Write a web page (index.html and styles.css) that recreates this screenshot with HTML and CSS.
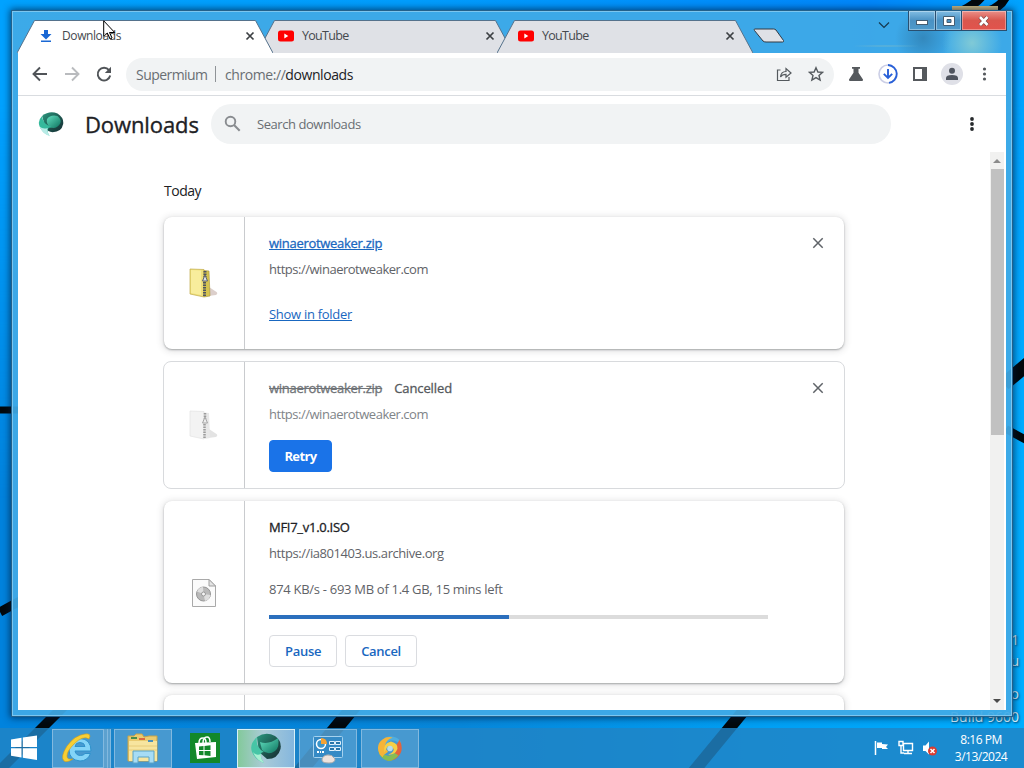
FILE: index.html
```html
<!DOCTYPE html>
<html lang="en">
<head>
  <meta charset="utf-8">
  <title>Downloads</title>
  <link rel="stylesheet" href="styles.css">
</head>
<body>
<div class="desktop">
  <svg class="wallpaper" width="1024" height="768" viewBox="0 0 1024 768">
    <g fill="none" stroke="#02080c">
      <path d="M0 410H18" stroke-width="7"/>
      <path d="M0 612L20 601" stroke-width="9"/>
      <path d="M-4 774L64 706" stroke-width="10"/>
      <path d="M690 776L746 708" stroke-width="12"/>
      <path d="M298 774L356 704" stroke-width="14"/>
      <path d="M1004 384L1030 362" stroke-width="14"/>
      <path d="M1006 429L1028 441" stroke-width="8"/>
      <path d="M960 12Q975 5 982-4M985 12Q1001 8 1006-4" stroke-width="9"/>
    </g>
    <path d="M952 6h46v5h-46z" fill="#d3bd83"/>
  </svg>
  <div class="watermark wm-a">1</div>
  <div class="watermark wm-b">u</div>
  <div class="watermark wm-c">o</div>
  <div class="watermark wm-d">Build 9600</div>

  <div class="window">
    <div class="titlebar">
      <div class="tabs">
        <div class="tab active">
          <svg class="tab-shape" width="256" height="33" viewBox="0 0 256 33"><path d="M0 33L17.500.5H238.500L256 33" fill="#fff" stroke="#55728c"/></svg>
          <svg class="favicon" width="16" height="16" viewBox="0 0 16 16"><path d="M6 2h4v4h3.500L8 11.500 2.500 6H6zM3 12.500h10V14H3z" fill="#1a68d4"/></svg>
          <span class="tab-title">Downloads</span>
          <svg class="tab-close" width="10" height="10" viewBox="0 0 10 10"><path d="M1.500 1.500l7 7M8.500 1.500l-7 7"/></svg>
        </div>
        <div class="tab">
          <svg class="tab-shape" width="256" height="33" viewBox="0 0 256 33"><path d="M0 33L17.500.5H238.500L256 33" fill="#dfe1e6" stroke="#55728c"/></svg>
          <svg class="favicon" width="16" height="16" viewBox="0 0 16 16"><rect y="2.500" width="16" height="11" rx="2.500" fill="#f00"/><path d="M6.300 5.500v5l4-2.500z" fill="#fff"/></svg>
          <span class="tab-title">YouTube</span>
          <svg class="tab-close" width="10" height="10" viewBox="0 0 10 10"><path d="M1.500 1.500l7 7M8.500 1.500l-7 7"/></svg>
        </div>
        <div class="tab">
          <svg class="tab-shape" width="256" height="33" viewBox="0 0 256 33"><path d="M0 33L17.500.5H238.500L256 33" fill="#dfe1e6" stroke="#55728c"/></svg>
          <svg class="favicon" width="16" height="16" viewBox="0 0 16 16"><rect y="2.500" width="16" height="11" rx="2.500" fill="#f00"/><path d="M6.300 5.500v5l4-2.500z" fill="#fff"/></svg>
          <span class="tab-title">YouTube</span>
          <svg class="tab-close" width="10" height="10" viewBox="0 0 10 10"><path d="M1.500 1.500l7 7M8.500 1.500l-7 7"/></svg>
        </div>
        <svg class="new-tab" width="32" height="15" viewBox="0 0 32 15"><path d="M1.500 1H20.500Q22 1 23 2L30.500 12.500Q31 14 29.500 14H13Q11 14 10 13L1.500 2.500Q1 1 1.500 1z" fill="#dfe1e6" stroke="#333b45"/></svg>
      </div>
      <svg class="tab-search" width="12" height="8" viewBox="0 0 12 8"><path d="M1 1.500l5 5 5-5" fill="none" stroke="#16384e" stroke-width="1.200"/></svg>
      <div class="caption-buttons">
        <div class="caption-button minimize"><svg width="13" height="6"><rect x=".5" y=".5" width="11" height="4" fill="#fff" stroke="#435d72"/></svg></div>
        <div class="caption-button maximize"><svg width="13" height="11"><path d="M.5.5h11v9H.5zM4 3.500v3h4v-3z" fill="#fff" fill-rule="evenodd" stroke="#435d72"/></svg></div>
        <div class="caption-button close"><svg width="14" height="12" viewBox="0 0 14 12"><path d="M3 2l7.500 8M10.500 2L3 10" stroke="#643939" stroke-width="4"/><path d="M3 2l7.500 8M10.500 2L3 10" stroke="#fff" stroke-width="2.700"/></svg></div>
      </div>
    </div>

    <div class="client">
      <div class="toolbar">
        <svg class="nav" width="20" height="20" viewBox="0 0 20 20"><path d="M17 10H4M10 3.500L3.500 10l6.500 6.500" fill="none" stroke="#505458" stroke-width="1.900"/></svg>
        <svg class="nav" width="20" height="20" viewBox="0 0 20 20"><path d="M3 10h13M10 3.500l6.500 6.500-6.500 6.500" fill="none" stroke="#b9bbbe" stroke-width="1.900"/></svg>
        <svg class="nav" width="20" height="20" viewBox="0 0 20 20"><path d="M15 6.200A6.300 6.300 0 1 0 16.200 11.500" fill="none" stroke="#505458" stroke-width="1.900"/><path d="M17 2.800V9h-6.200z" fill="#505458"/></svg>
        <div class="omnibox">
          <span class="origin">Supermium</span>
          <span class="origin-separator"></span>
          <span class="url">chrome://<b>downloads</b></span>
          <svg class="share" width="16" height="16" viewBox="0 0 16 16"><path d="M4.500 4H1.500V14.500H13V11M4.500 11Q5 5.500 10 5.500V2.500L15 7l-5 4.200V8.300Q6 8.300 4.500 11z" fill="none" stroke="#555a5e" stroke-width="1.200"/></svg>
          <svg class="star" width="16" height="16" viewBox="0 0 16 16"><path d="M8 1.700l1.900 4.300 4.700.4-3.600 3.100 1.100 4.600L8 11.600l-4.100 2.500L5 9.500 1.400 6.400l4.700-.4z" fill="none" stroke="#555a5e" stroke-width="1.400"/></svg>
        </div>
        <svg class="action" width="20" height="20" viewBox="0 0 20 20"><path d="M6 3h8v1.800h-1.500v4L17 15.500Q17.300 17 15.800 17H4.200Q2.700 17 3 15.500l4.500-6.700v-4H6z" fill="#55595d"/></svg>
        <svg class="action" width="20" height="20" viewBox="0 0 20 20"><circle cx="10" cy="10" r="9" fill="none" stroke="#cccfe6" stroke-width="1.600"/><path d="M10 1a9 9 0 0 1 1 17.900" fill="none" stroke="#2860d8" stroke-width="1.800"/><path d="M10 5v9M5.800 9.800L10 14l4.200-4.200" fill="none" stroke="#2860d8" stroke-width="1.900"/></svg>
        <svg class="action" width="20" height="20" viewBox="0 0 20 20"><path d="M3 3h14v14H3zM5 5v10h7V5z" fill="#55595d" fill-rule="evenodd"/></svg>
        <svg class="action profile" width="22" height="22" viewBox="0 0 22 22"><circle cx="11" cy="11" r="11" fill="#dfe0e7"/><circle cx="11" cy="7.800" r="3" fill="#50555f"/><path d="M5 17v-2Q5 12 11 12t6 3v2z" fill="#50555f"/></svg>
        <svg class="action" width="20" height="20" viewBox="0 0 20 20" fill="#55595d"><circle cx="10.500" cy="5" r="1.600"/><circle cx="10.500" cy="10" r="1.600"/><circle cx="10.500" cy="15" r="1.600"/></svg>
      </div>

      <div class="page-header">
        <svg class="logo" width="26" height="26" viewBox="0 0 32 32">
          <defs>
            <linearGradient id="teal" x1="0" y1="0" x2="1" y2="1"><stop offset="0" stop-color="#63e0c0"/><stop offset="1" stop-color="#0d735f"/></linearGradient>
            <linearGradient id="dark" x1="0" y1="0" x2="1" y2="1"><stop offset="0" stop-color="#2a9a80"/><stop offset=".6" stop-color="#1d4f4a"/><stop offset="1" stop-color="#142d33"/></linearGradient>
          </defs>
          <path d="M5 6Q14-1 24 3q8 5 7 13-2 10-13 10-6 0-9-6z" fill="url(#dark)"/>
          <path d="M11 10Q15 4 24 6q6 5 3 10-5 7-12 4-5-4-4-10z" fill="url(#teal)"/>
          <path d="M5 6Q-1 12 2 19q3 8 12 11-4-5-1-9 2-1 4-1Q5 15 5 6z" fill="#35b99c"/>
          <path d="M2 19q3 9 13 12-5-6-3-10-6 2-10-2z" fill="#b8ebe6"/>
        </svg>
        <h1>Downloads</h1>
        <div class="search">
          <svg width="20" height="20" viewBox="0 0 20 20"><circle cx="7.500" cy="7.500" r="4.800" fill="none" stroke="#898c90" stroke-width="1.900"/><path d="M11 11l5.700 5.700" stroke="#898c90" stroke-width="2.100"/></svg>
          <span>Search downloads</span>
        </div>
        <svg class="menu" width="20" height="20" viewBox="0 0 20 20" fill="#26292c"><circle cx="10" cy="5" r="1.900"/><circle cx="10" cy="10" r="1.900"/><circle cx="10" cy="15" r="1.900"/></svg>
      </div>

      <div class="page">
        <div class="list">
          <h2>Today</h2>

          <div class="card done">
            <div class="file-icon">
              <svg width="32" height="32" viewBox="0 0 32 32">
                <path d="M20 29l8-1q3-2-1-4l-6-4z" fill="#dccfcb"/>
                <path d="M2 2l14 .5V30L2 27z" fill="#efe07a" stroke="#c0aa4b" stroke-width=".7"/>
                <path d="M3 3l10 .5V28l-10-2z" fill="#f8ed9c"/>
                <path d="M16 3.500l5 .5L22 29l-6 1z" fill="#d5c34e" stroke="#a8933d" stroke-width=".6"/>
                <path d="M17 4v6M16.500 15v15" stroke="#4e5460" stroke-width="3" stroke-dasharray="1.500 1"/>
                <path d="M17 8l-2.500 6h5z" fill="#dfe3e9" stroke="#5b6070"/>
              </svg>
            </div>
            <div class="details">
              <a class="name">winaerotweaker.zip</a>
              <div class="source">https://winaerotweaker.com</div>
              <a class="show">Show in folder</a>
            </div>
            <svg class="remove" width="12" height="12" viewBox="0 0 12 12"><path d="M1.300 1.300l9.400 9.400M10.700 1.300l-9.400 9.400"/></svg>
          </div>

          <div class="card cancelled">
            <div class="file-icon">
              <svg width="32" height="32" viewBox="0 0 32 32">
                <path d="M20 29l8-1q3-2-1-4l-6-4z" fill="#e3e3e3"/>
                <path d="M2 2l14 .5V30L2 27z" fill="#f3f3f3" stroke="#e2e2e2" stroke-width=".7"/>
                <path d="M16 3.500l5 .5L22 29l-6 1z" fill="#e8e8e8"/>
                <path d="M17 4v6M16.500 15v15" stroke="#9c9c9c" stroke-width="2.500" stroke-dasharray="1.500 1"/>
                <path d="M17 8l-2.500 6h5z" fill="#eee" stroke="#a5a5a5"/>
              </svg>
            </div>
            <div class="details">
              <div class="title-row"><span class="name">winaerotweaker.zip</span><span class="tag">Cancelled</span></div>
              <div class="source">https://winaerotweaker.com</div>
              <div class="button primary">Retry</div>
            </div>
            <svg class="remove" width="12" height="12" viewBox="0 0 12 12"><path d="M1.300 1.300l9.400 9.400M10.700 1.300l-9.400 9.400"/></svg>
          </div>

          <div class="card progressing">
            <div class="file-icon">
              <svg width="32" height="32" viewBox="0 0 32 32">
                <path d="M4.500 3.500H21L27.500 10v20.500h-23z" fill="#fbfbfb" stroke="#a9a9a9"/>
                <path d="M21 3.500V10h6.500z" fill="#e4e4e4" stroke="#a0a0a0"/>
                <circle cx="15.500" cy="18" r="7" fill="#b9b9b9" stroke="#969696"/>
                <path d="M15.500 18L9 15.500q2-4.500 6-4.500zM15.500 18l7 1q-1 5-5.500 6z" fill="#dedede"/>
                <circle cx="15.500" cy="18" r="2" fill="#f4f4f4" stroke="#999"/>
              </svg>
            </div>
            <div class="details">
              <div class="name iso">MFI7_v1.0.ISO</div>
              <div class="source">https://ia801403.us.archive.org</div>
              <div class="status">874 KB/s - 693 MB of 1.4 GB, 15 mins left</div>
              <div class="progress"><div class="progress-bar" style="width: 48%"></div></div>
              <div class="buttons">
                <div class="button">Pause</div>
                <div class="button">Cancel</div>
              </div>
            </div>
          </div>

          <div class="card next"><div class="file-icon"></div></div>
        </div>
        <div class="scrollbar">
          <div class="arrow up"></div>
          <div class="thumb"></div>
          <div class="arrow down"></div>
        </div>
      </div>
    </div>
  </div>

  <div class="taskbar">
    <div class="start">
      <svg width="28" height="26" viewBox="0 0 28 26" fill="#fff"><path d="M1 4.500l10.500-1.700V12H1zM12.800 2.600L27 .5V12H12.800zM1 13.200h10.500v9.300L1 20.800zM12.800 13.200H27V25l-14.200-2.200z"/></svg>
    </div>
    <div class="task ie">
      <svg width="34" height="32" viewBox="0 0 34 32">
        <path d="M30 19H14q1 4.500 5.500 4.500 3 0 4.500-2h5.500q-3 7.500-10.500 7.500Q8 28 8 17.500 9 7 19 6.500q11 .5 11 12.500zM14 14.500h10q-.5-4-5-4t-5 4z" fill="#83d4f8" stroke="#2f92cc" fill-rule="evenodd"/>
        <path d="M28 7q3-6-4-5Q14 3 6 14-1 25 3 29q3 2 9-2-6 1-6-3 0-5 7-12Q22 3 28 7z" fill="#f7cf35" stroke="#d19b16" stroke-width=".6"/>
      </svg>
    </div>
    <div class="task explorer">
      <svg width="34" height="32" viewBox="0 0 34 32">
        <path d="M2 4h6l2-2h6l2 3 5-1h8v25H2z" fill="#eacb70" stroke="#c5a34b"/>
        <path d="M3 9h28v20H3z" fill="#f7e59f"/><path d="M5 5h6v2H5z" fill="#478c4c"/><path d="M13 6h6v2h-6z" fill="#db6841"/><path d="M22 8h5v2h-5z" fill="#4b90ba"/>
        <path d="M3 14h28M3 18h28" stroke="#e6cc7b"/>
        <path d="M7 31V19h21v12h-5v-6H12v6z" fill="#a6dcf5" stroke="#5ba4c6"/>
      </svg>
    </div>
    <div class="store">
      <svg width="30" height="30" viewBox="0 0 30 30"><path d="M0 0h30v30H0z" fill="#12882a"/><path d="M5 10l21-1v15L7 26z" fill="#fff"/><path d="M9 10q0-5 4-5 3 0 3 5M13 10q0-6 4-6 3 0 3 5" fill="none" stroke="#fff" stroke-width="1.500"/><path d="M9 13.500l4.500-.5v4H9zM14.500 12.900l6-.6V17h-6zM9 18h4.500v4.300L9 22zM14.500 18h6v5l-6-.7z" fill="#12882a"/></svg>
    </div>
    <div class="task active-task">
      <svg width="32" height="32" viewBox="0 0 32 32">
        <path d="M7 5Q16-1 25 4q7 5 5.500 13Q28 27 17 27L9 20z" fill="url(#dark)"/>
        <path d="M10 10Q19 13 28 6q2 9-3 13-7 5-13-1z" fill="url(#teal)"/>
        <path d="M7 5Q-1 12 2 20q3 8 12 11-4-5-3-9 0-2 3-2Q5 15 7 5z" fill="#47c5a6"/>
        <path d="M3 20q3 8 11 11-4-5-3-9-5 2-8-2z" fill="#a8f0d2"/>
      </svg>
    </div>
    <div class="task">
      <svg width="32" height="32" viewBox="0 0 32 32">
        <rect x="1.500" y="4.500" width="29" height="21" rx="1" fill="#358ac5" stroke="#a5d2ef"/>
        <circle cx="9" cy="12" r="4.500" fill="#3c95ca" stroke="#fff" stroke-width="1.500"/><path d="M9 12V6q6 0 6 6z" fill="#f5a335"/>
        <path d="M17.500 9.500h5v3h-5zM23.500 9.500h5v3h-5zM17.500 15.500h5v3h-5zM23.500 15.500h5v3h-5z" fill="#2876aa" stroke="#dff1fc"/>
        <path d="M5 20h4M10 20h3" stroke="#fff" stroke-width="2" stroke-dasharray="2 1"/>
        <path d="M10 28q0-4 5-5 5-1 8 4 0 4-6 4-7 0-7-3z" fill="#eee2dc" stroke="#aaa"/>
      </svg>
    </div>
    <div class="task">
      <svg width="28" height="28" viewBox="0 0 30 30">
        <path d="M5 9Q12-1 22 4q5 2 5 8-5-6-11-5-4 1-5 6-3-1-6-4z" fill="#4faee0"/>
        <path d="M25 6q6 11-2 19-5 5-12 3 7-1 9-6 1-4-2-7 5-3 7-9z" fill="#e3633c"/>
        <path d="M24 23Q15 33 7 26q-5-4-4-11 3 7 9 8 4 1 7-3 3 1 5 3z" fill="#86bd55"/>
        <path d="M4 22Q-1 12 7 6q5-4 11-2-7 2-8 7-1 4 3 8-5 3-6 6z" fill="#f5b438"/>
        <path d="M9 20q-2-10 7-12 8 2 7 8-3 7-10 6 6-2 6-6-4-5-7-2z" fill="#f6cf45"/>
        <circle cx="15" cy="15.500" r="3" fill="#b9dce9"/>
      </svg>
    </div>
    <div class="tray">
      <svg width="16" height="16" viewBox="0 0 16 16"><path d="M1.500 1v14" stroke="#fff" stroke-width="1.500"/><path d="M3 2.500h5v1.500l6 .5-2 2.500 2 2H8V8H3z" fill="#fff"/></svg>
      <svg width="16" height="16" viewBox="0 0 16 16"><path d="M5.500 3.500h9v7h-9zM10 10v3M6 13.500h8M1 1.500h4v4H1zM3 5v8h3" fill="none" stroke="#fff" stroke-width="1.400"/></svg>
      <svg width="16" height="16" viewBox="0 0 16 16"><path d="M1 5.500h2.500L7 1.500v13L3.500 11H1z" fill="#fff"/><circle cx="10.500" cy="11" r="4.500" fill="#d93c30"/><path d="M8.500 9l4 4M12.500 9l-4 4" stroke="#fff" stroke-width="1.500"/></svg>
    </div>
    <div class="clock"><div>8:16 PM</div><div>3/13/2024</div></div>
  </div>

  <svg class="cursor" width="14" height="20" viewBox="0 0 14 20"><path d="M.7.800V16.500L4.300 13l2.800 6 2-1-2.600-5.500h5.200z" fill="#fff" fill-opacity=".7" stroke="#000"/></svg>
</div>
</body>
</html>
```
FILE: styles.css
```css
body {
  margin: 0;
  font-family: "Open Sans", "Noto Sans", sans-serif;
  font-size: 13px;
  color: #202124;
}

svg {
  display: block;
  flex-shrink: 0;
}

.desktop {
  position: relative;
  width: 1024px;
  height: 768px;
  overflow: hidden;
  background: linear-gradient(90deg, #0083de 0, #0787da 45%, #00a0f5 75%, #00aeff 100%);
}

.desktop::before {
  content: "";
  position: absolute;
  inset: 0 0 auto;
  height: 500px;
  background: linear-gradient(90deg, #00a2ff 0, #009dfd 40%, #0086fa 85%, #00a4ff 100%);
  -webkit-mask-image: linear-gradient(#000 20%, transparent);
  mask-image: linear-gradient(#000 20%, transparent);
}

.wallpaper {
  position: absolute;
  top: 0;
  left: 0;
}

.watermark {
  position: absolute;
  right: 5px;
  font-size: 14px;
  line-height: 16px;
  color: #d9f3ff;
  text-shadow: 1px 1px 2px #00466f;
}

.wm-a { top: 632px; }
.wm-b { top: 653px; }
.wm-c { top: 686px; }
.wm-d { top: 709px; }

/* browser window */
.window {
  position: absolute;
  top: 10px;
  left: 11px;
  box-sizing: border-box;
  width: 1002px;
  height: 707px;
  padding: 0 6px 6px;
  border: 1px solid #23618b;
  background: rgba(65, 170, 230, .93);
  box-shadow: inset 0 0 0 1px #7cc6ef, 0 0 7px 1px rgba(0, 25, 60, .7);
}

.titlebar {
  display: flex;
  align-items: flex-start;
  height: 42px;
  background: radial-gradient(ellipse at 868px 35px, rgba(120, 185, 200, .6) 0, transparent 35px),
    radial-gradient(circle at 905px 27px, rgba(45, 115, 160, .6) 0, transparent 28px),
    radial-gradient(circle at 954px 32px, rgba(145, 210, 210, .8) 0, transparent 30px);
}

.tabs {
  display: flex;
  flex: 1;
  padding-top: 9px;
}

.tab {
  position: relative;
  display: flex;
  align-items: center;
  box-sizing: border-box;
  width: 256px;
  height: 33px;
  margin-right: -16px;
  padding: 0 19px 2px 20px;
}

.tab.active {
  z-index: 1;
}

.tab-shape {
  position: absolute;
  top: 0;
  left: -1px;
}

.favicon {
  position: relative;
}

.tab-title {
  position: relative;
  flex: 1;
  margin-left: 8px;
  font-size: 12px;
  letter-spacing: -.4px;
  color: #45494e;
}

.tab:not(.active) .tab-title {
  letter-spacing: -.7px;
  font-size: 12.5px;
}

.tab-close {
  position: relative;
  fill: none;
  stroke: #3c4043;
  stroke-width: 1.700;
}

.new-tab {
  margin: 8px 0 0 15px;
}

.tab-search {
  margin: 10px 18px 0 0;
}

.caption-buttons {
  display: flex;
  margin-right: -1px;
  border: 1px solid #294f70;
  border-top: 0;
}

.caption-button {
  display: flex;
  align-items: center;
  justify-content: center;
  height: 19px;
  background: linear-gradient(#82bee4, #4a91c3 50%, #4e9acb);
  box-shadow: inset 0 0 0 1px rgba(255, 255, 255, .35);
}

.caption-button + .caption-button {
  border-left: 1px solid #294f70;
}

.minimize {
  width: 26px;
}

.minimize svg {
  margin: 5px 0 0 1px;
}

.maximize {
  width: 25px;
}

.maximize svg {
  margin: 1px 0 0 1px;
}

.close {
  width: 44px;
  background: linear-gradient(#e99089, #da564d 50%, #e2534c);
}

.client {
  display: flex;
  flex-direction: column;
  height: 657px;
  background: #fff;
}

.toolbar {
  display: flex;
  align-items: center;
  box-sizing: border-box;
  height: 43px;
  padding: 0 12px;
  border-bottom: 1px solid #d9dce0;
}

.nav {
  margin-right: 12px;
}

.omnibox {
  display: flex;
  flex: 1;
  align-items: center;
  box-sizing: border-box;
  height: 33px;
  padding: 0 10px;
  border-radius: 17px;
  background: #f1f3f4;
  font-size: 14px;
  letter-spacing: -.55px;
  color: #696e73;
}

.origin {
  width: 71px;
}

.origin-separator {
  width: 1px;
  height: 16px;
  margin: 0 9px 0 8px;
  background: #8f9397;
}

.url {
  flex: 1;
  letter-spacing: -.43px;
}

.url b {
  font-weight: 400;
  color: #202124;
}

.star {
  margin-left: 16px;
}

.action {
  margin-left: 12px;
}

.action.profile {
  margin: 0 -1px 0 11px;
}

.page-header {
  display: flex;
  align-items: center;
  box-sizing: border-box;
  height: 56px;
  padding: 0 24px 0 20px;
}

.page-header h1 {
  margin: 0 0 0 21px;
  width: 126px;
  font-size: 22px;
  font-weight: 500;
  line-height: 30px;
  letter-spacing: -.1px;
  -webkit-text-stroke: .35px;
}

.search {
  display: flex;
  align-items: center;
  box-sizing: border-box;
  width: 680px;
  height: 40px;
  padding-left: 12px;
  border-radius: 20px;
  background: #f1f3f4;
  letter-spacing: -.45px;
  color: #696e73;
}

.search span {
  margin-left: 14px;
}

.menu {
  margin-left: auto;
}

.page {
  display: flex;
  flex: 1;
  min-height: 0;
  overflow: hidden;
}

.list {
  flex: 1;
  padding: 28px 145px 0 146px;
}

.list h2 {
  margin: 0 0 15px;
  font-size: 14px;
  font-weight: 400;
  line-height: 22px;
  letter-spacing: -.5px;
}

.card {
  display: flex;
  box-sizing: border-box;
  width: 680px;
  margin-bottom: 12px;
  border-radius: 8px;
  background: #fff;
  box-shadow: 0 1px 2px rgba(60, 64, 67, .4), 0 1px 6px 2px rgba(60, 64, 67, .13);
}

.file-icon {
  display: flex;
  align-items: center;
  justify-content: center;
  box-sizing: border-box;
  width: 81px;
  flex-shrink: 0;
  border-right: 1px solid #c9cbce;
}

.details {
  flex: 1;
  padding: 16px 0 0 24px;
  line-height: 20px;
  letter-spacing: -.29px;
}

.name,
.tag {
  font-weight: 500;
  -webkit-text-stroke: .3px;
}

.source,
.status {
  color: #5f6368;
}

.source {
  margin-top: 6px;
  letter-spacing: -.48px;
}

.progressing .source {
  letter-spacing: -.43px;
}

.done {
  height: 132px;
}

.done a {
  display: block;
  width: max-content;
  color: #1967c0;
  text-decoration: underline;
}

.show {
  margin-top: 25px;
}

.cancelled {
  width: 682px;
  height: 128px;
  margin-left: -1px;
  border: 1px solid #d8dadd;
  box-shadow: none;
}

.cancelled .name {
  color: #6f7377;
  text-decoration: line-through;
}

.cancelled .source {
  color: #808488;
}

.tag {
  margin-left: 12px;
  letter-spacing: -.1px;
  color: #55595d;
}

.iso {
  letter-spacing: -.28px;
}

.remove {
  margin: 20px 20px 0 0;
  stroke: #5f6368;
  stroke-width: 1.500;
}

.button {
  box-sizing: border-box;
  width: max-content;
  height: 32px;
  padding: 0 15px;
  border: 1px solid #dadce0;
  border-radius: 4px;
  font-weight: 600;
  line-height: 30px;
  letter-spacing: -.3px;
  color: #1967c0;
}

.primary {
  width: 63px;
  margin-top: 16px;
  padding: 0;
  border-color: #1a73e8;
  background: #1a73e8;
  color: #fff;
  font-weight: 700;
  letter-spacing: -.6px;
  text-align: center;
}

.progressing {
  height: 182px;
}

.status {
  margin-top: 16px;
}

.progress {
  width: 499px;
  height: 4px;
  margin: 16px 0;
  background: #dcdcdc;
}

.progress-bar {
  height: 4px;
  background: #2b6fbd;
}

.buttons {
  display: flex;
  gap: 8px;
}

.next {
  height: 100px;
}

.scrollbar {
  display: flex;
  flex-direction: column;
  align-items: center;
  width: 15px;
  margin-right: 2px;
  background: #f1f1f0;
}

.arrow {
  width: 0;
  height: 0;
  border: 4px solid transparent;
}

.up {
  margin: 3px 0 6px;
  border-bottom-color: #8b8b8b;
}

.down {
  margin: auto 0 3px;
  border-top-color: #4b4b4b;
}

.thumb {
  width: 13px;
  height: 266px;
  background: #c1c1c1;
}

/* taskbar */
.taskbar {
  position: absolute;
  inset: 728px 0 0;
  display: flex;
  align-items: center;
  background: rgba(33, 132, 196, .82);
  color: #fff;
}

.start {
  width: 42px;
  padding-left: 10px;
}

.task {
  display: flex;
  align-items: center;
  justify-content: center;
  box-sizing: border-box;
  width: 58px;
  height: 39px;
  margin-right: 4px;
  border: 1px solid #82b9df;
  background: rgba(120, 175, 215, .48);
}

.ie {
  margin-right: 10px;
  width: 52px;
  box-shadow: 3px 0 0 #5ca1cf, 4px 0 0 #82b9df, 6px 0 0 #5ca1cf, 7px 0 0 #82b9df;
}

.explorer {
  margin-right: 18px;
}

.store {
  margin-right: 17px;
}

.active-task {
  border-color: #d8f0f7;
  background: linear-gradient(90deg, #83c99b, #aacbd7 45%, #85b7de);
}

.tray {
  display: flex;
  gap: 8px;
  margin-left: auto;
}

.clock {
  width: 86px;
  font-size: 12px;
  line-height: 17px;
  letter-spacing: -.5px;
  text-align: center;
}

.cursor {
  position: absolute;
  z-index: 2;
  top: 20px;
  left: 103px;
}
```
